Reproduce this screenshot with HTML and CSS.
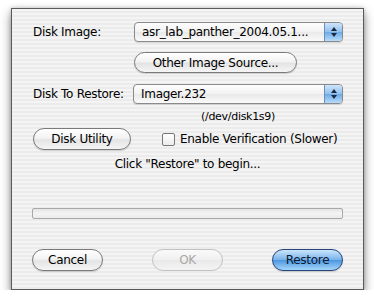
FILE: index.html
```html
<!DOCTYPE html>
<html>
<head>
<meta charset="utf-8">
<link rel="stylesheet" href="styles.css">
</head>
<body>
<div class="window">
  <div class="row r1">
    <span class="label">Disk Image:</span>
    <div class="popup"><span class="ptext">asr_lab_panther_2004.05.1...</span><span class="parrow"><svg width="8" height="12" viewBox="0 0 8 12"><path d="M4 1 L7 5 L1 5 Z M4 11 L7 7 L1 7 Z" fill="#1b2a40"/></svg></span></div>
  </div>
  <div class="row r2">
    <div class="btn other">Other Image Source...</div>
  </div>
  <div class="row r3">
    <span class="label">Disk To Restore:</span>
    <div class="popup"><span class="ptext">Imager.232</span><span class="parrow"><svg width="8" height="12" viewBox="0 0 8 12"><path d="M4 1 L7 5 L1 5 Z M4 11 L7 7 L1 7 Z" fill="#1b2a40"/></svg></span></div>
  </div>
  <div class="dev">(/dev/disk1s9)</div>
  <div class="row r4">
    <div class="btn util">Disk Utility</div>
    <label class="check"><span class="box"></span>Enable Verification (Slower)</label>
  </div>
  <div class="status">Click "Restore" to begin...</div>
  <div class="progress"></div>
  <div class="row buttons">
    <div class="btn cancel">Cancel</div>
    <div class="btn ok disabled">OK</div>
    <div class="btn restore">Restore</div>
  </div>
</div>
</body>
</html>
```
FILE: styles.css
```css
html, body {
  margin: 0;
  padding: 0;
  background: #fff;
}
body {
  padding: 8px 0 0 11px;
  font-family: "DejaVu Sans", "Liberation Sans", sans-serif;
  font-size: 12px;
  letter-spacing: -0.3px;
  color: #000;
}
.window {
  box-sizing: border-box;
  width: 353px;
  height: 282px;
  border: 1px solid #5a5a5a;
  box-shadow: 0 5px 10px rgba(0,0,0,0.45), 0 0 4px rgba(0,0,0,0.2);
  background: repeating-linear-gradient(to bottom, #f4f4f4 0px, #f4f4f4 2px, #ebebeb 2px, #ebebeb 4px);
  padding: 13px 20px 0 21px;
  display: flex;
  flex-direction: column;
}
.row {
  display: flex;
  align-items: center;
}
.label {
  width: 101px;
  flex: none;
  white-space: nowrap;
}
.popup {
  box-sizing: border-box;
  height: 20px;
  flex: 1;
  border: 1px solid #8a8a8a;
  border-radius: 4px;
  background: linear-gradient(to bottom, #fdfdfd, #f2f2f2 50%, #e9e9e9 51%, #fafafa);
  display: flex;
  align-items: center;
  overflow: hidden;
  box-shadow: 0 1px 1px rgba(0,0,0,0.12);
}
.ptext {
  flex: 1;
  padding-left: 7px;
  white-space: nowrap;
}
.parrow {
  width: 17px;
  height: 18px;
  border-left: 1px solid #6c8db8;
  border-radius: 0 3px 3px 0;
  background: linear-gradient(to bottom, #cfe4fa, #8fc0ef 50%, #6ea9e6 51%, #b6dcfb);
  display: flex;
  align-items: center;
  justify-content: center;
}
.r3 { margin-top: 11px; }
.r3 .label { width: 100px; }
.r2 {
  margin-top: 10px;
  padding-left: 101px;
}
.btn {
  box-sizing: border-box;
  height: 21px;
  border: 1px solid #7a7a7a;
  border-radius: 11px;
  background: linear-gradient(to bottom, #ffffff, #f3f3f3 45%, #e4e4e4 55%, #f5f5f5);
  display: flex;
  align-items: center;
  justify-content: center;
  box-shadow: 0 1px 1px rgba(0,0,0,0.15);
  white-space: nowrap;
}
.other { width: 163px; }
.dev {
  margin-top: 6px;
  padding-left: 100px;
  text-align: center;
  font-size: 11px;
  height: 14px;
}
.r4 { margin-top: 4px; }
.util { width: 98px; height: 22px; }
.check {
  margin-left: 31px;
  display: flex;
  align-items: center;
  white-space: nowrap;
  flex: none;
}
.box {
  box-sizing: border-box;
  width: 13px;
  height: 13px;
  border: 1px solid #777;
  border-radius: 2px;
  background: linear-gradient(to bottom, #fff, #ececec);
  margin-right: 5px;
}
.status {
  margin-top: 7px;
  text-align: center;
  margin-left: -21px;
  margin-right: -20px;
}
.progress {
  box-sizing: border-box;
  margin-top: 37px;
  height: 11px;
  margin-left: -1px;
  border: 1px solid #a8a8a8;
  border-radius: 2px;
  background: linear-gradient(to bottom, #e4e4e4, #f4f4f4 50%, #eaeaea);
}
.buttons {
  margin-top: 30px;
  margin-left: -1px;
  justify-content: space-between;
}
.cancel, .ok, .restore { width: 71px; height: 22px; }
.disabled {
  color: #a8a8a8;
  border-color: #c2c2c2;
  background: linear-gradient(to bottom, #fafafa, #f0f0f0 50%, #e9e9e9 51%, #f4f4f4);
  box-shadow: none;
}
.restore {
  color: #0d1a33;
  border-color: #26457a;
  background: linear-gradient(to bottom, #cbe5fb, #79b4ec 48%, #4e97e0 52%, #a5d6fb);
}
```
